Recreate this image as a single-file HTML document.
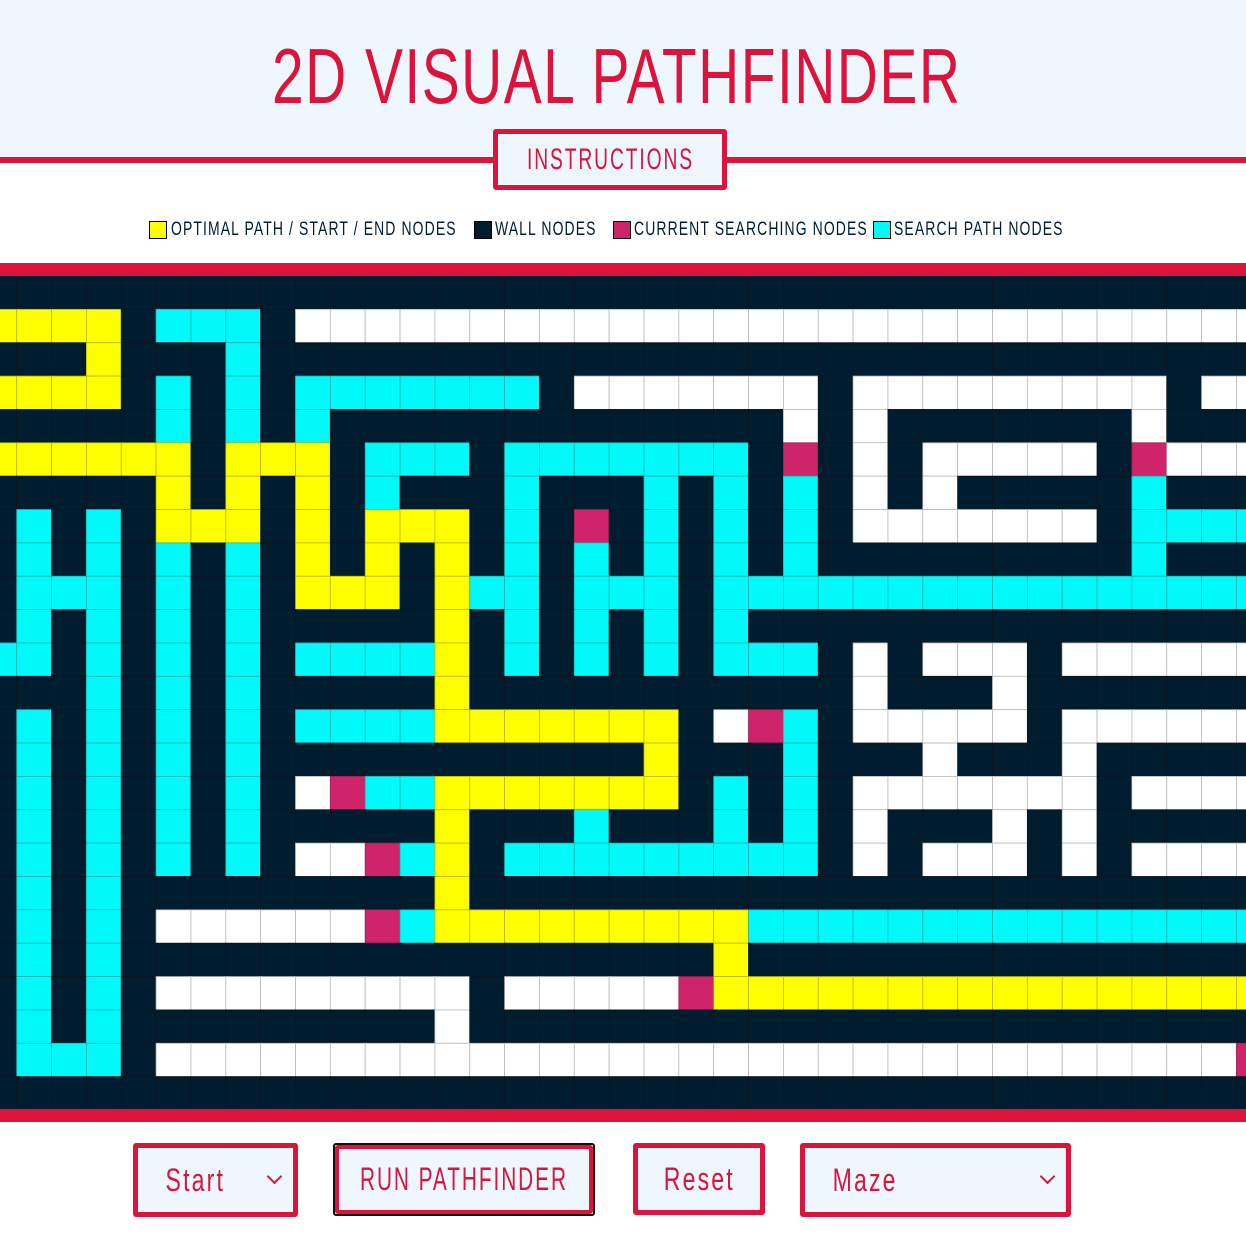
<!DOCTYPE html>
<html><head><meta charset="utf-8">
<style>
*{margin:0;padding:0;box-sizing:border-box}
body{width:1246px;height:1259px;background:#fff;position:relative;overflow:hidden;font-family:"Liberation Sans",sans-serif;color:#dc143c}
.hdr{position:absolute;left:0;top:0;width:1246px;height:159px;background:#eff7fe}
.line{position:absolute;left:0;top:157px;width:1246px;height:6px;background:#dc143c}
.title{position:absolute;left:272px;top:36px;width:686px;height:80px;overflow:visible}
.title span{display:inline-block;font-size:78px;line-height:80px;white-space:nowrap;transform-origin:0 0;transform:scaleX(0.73);letter-spacing:2px}
.box{position:absolute;border:5px solid #dc143c;border-radius:3px;background:#eff7fe;display:flex;align-items:center;justify-content:center;color:#dc143c;white-space:nowrap}
.box span{display:inline-block;transform:scaleX(0.72);letter-spacing:3px}
.legend{position:absolute;top:219px;left:0;height:22px;font-size:19px;color:#001d30;white-space:nowrap}
.legend .sw{position:absolute;top:2px;width:18px;height:18px;border:1px solid #000}
.legend .tx{position:absolute;top:0;display:inline-block;transform-origin:0 50%;transform:scaleX(0.735);letter-spacing:1.5px}
.band{position:absolute;left:0;width:1246px;height:13px;background:#dc143c}
.chev{position:absolute;width:11px;height:11px;border-right:2px solid #dc143c;border-bottom:2px solid #dc143c;transform:rotate(45deg)}
</style></head><body>
<div class="hdr"></div>
<div class="line"></div>
<div class="title"><span>2D VISUAL PATHFINDER</span></div>
<div class="box" style="left:493px;top:129px;width:234px;height:61px;font-size:30px;"><span style="transform:scaleX(0.64)">INSTRUCTIONS</span></div>

<div class="legend">
 <div class="sw" style="left:149px;background:#ffff00"></div><span class="tx" style="left:171px">OPTIMAL PATH / START / END NODES</span>
 <div class="sw" style="left:474px;background:#001d30"></div><span class="tx" style="left:495px">WALL NODES</span>
 <div class="sw" style="left:613px;background:#d0246a"></div><span class="tx" style="left:634px">CURRENT SEARCHING NODES</span>
 <div class="sw" style="left:873px;background:#00fafa"></div><span class="tx" style="left:894px">SEARCH PATH NODES</span>
</div>

<div class="band" style="top:263px"></div>
<svg id="g" style="position:absolute;left:0;top:276px" width="1246" height="834" xmlns="http://www.w3.org/2000/svg"></svg>
<div class="band" style="top:1109px"></div>

<div class="box" style="left:133px;top:1143px;width:165px;height:74px;font-size:32px;justify-content:flex-start;padding-left:16px"><span>Start</span></div>
<div class="chev" style="left:269px;top:1171px"></div>
<div style="position:absolute;left:333px;top:1143px;width:262px;height:73px;border:2px solid #111;border-radius:3px"></div>
<div class="box" style="left:335px;top:1145px;width:258px;height:69px;font-size:32px;border-width:4px"><span style="transform:scaleX(0.65)">RUN PATHFINDER</span></div>
<div class="box" style="left:633px;top:1143px;width:132px;height:72px;font-size:32px"><span>Reset</span></div>
<div class="box" style="left:800px;top:1143px;width:271px;height:74px;font-size:32px;justify-content:flex-start;padding-left:15px"><span>Maze</span></div>
<div class="chev" style="left:1042px;top:1171px"></div>

<script>
var R=[
"WWWWWWWWWWWWWWWWWWWWWWWWWWWWWWWWWWWWW",
"YYYYWCCCWEEEEEEEEEEEEEEEEEEEEEEEEEEEE",
"WWWYWWWCWWWWWWWWWWWWWWWWWWWWWWWWWWWWW",
"YYYYWCWCWCCCCCCCWEEEEEEEWEEEEEEEEEWEE",
"WWWWWCWCWCWWWWWWWWWWWWWEWEWWWWWWWEWWW",
"YYYYYYWYYYWCCCWCCCCCCCWPWEWEEEEEWPEEE",
"WWWWWYWYWYWCWWWCWWWCWCWCWEWEWWWWWCWWW",
"WCWCWYYYWYWYYYWCWPWCWCWCWEEEEEEEWCCCC",
"WCWCWCWCWYWYWYWCWCWCWCWCWWWWWWWWWCWWW",
"WCCCWCWCWYYYWYCCWCCCWCCCCCCCCCCCCCCCC",
"WCWCWCWCWWWWWYWCWCWCWCWWWWWWWWWWWWWWW",
"CCWCWCWCWCCCCYWCWCWCWCCCWEWEEEWEEEEEE",
"WWWCWCWCWWWWWYWWWWWWWWWWWEWWWEWWWWWWW",
"WCWCWCWCWCCCCYYYYYYYWEPCWEEEEEWEEEEEE",
"WCWCWCWCWWWWWWWWWWWYWWWCWWWEWWWEWWWWW",
"WCWCWCWCWEPCCYYYYYYYWCWCWEEEEEEEWEEEE",
"WCWCWCWCWWWWWYWWWCWWWCWCWEWWWEWEWWWWW",
"WCWCWCWCWEEPCYWCCCCCCCCCWEWEEEWEWEEEE",
"WCWCWWWWWWWWWYWWWWWWWWWWWWWWWWWWWWWWW",
"WCWCWEEEEEEPCYYYYYYYYYCCCCCCCCCCCCCCC",
"WCWCWWWWWWWWWWWWWWWWWYWWWWWWWWWWWWWWW",
"WCWCWEEEEEEEEEWEEEEEPYYYYYYYYYYYYYYYY",
"WCWCWWWWWWWWWEWWWWWWWWWWWWWWWWWWWWWWW",
"WCCCWEEEEEEEEEEEEEEEEEEEEEEEEEEEEEEEP",
"WWWWWWWWWWWWWWWWWWWWWWWWWWWWWWWWWWWWW"];
var col={W:"#001d30",E:"#ffffff",C:"#00fafa",Y:"#ffff00",P:"#d0246a"};
var st={W:"#0a1420",E:"#b8b8b8",C:"#1fb5b5",Y:"#b8b800",P:"#a01e52"};
var s="",cw=34.85,ch=33.36,x0=-18.15;
for(var r=0;r<R.length;r++)for(var c=0;c<R[r].length;c++){var k=R[r][c];
s+='<rect x="'+(x0+c*cw).toFixed(2)+'" y="'+(r*ch).toFixed(2)+'" width="'+cw+'" height="'+ch+'" fill="'+col[k]+'" stroke="'+st[k]+'" stroke-width="0.8"/>';}
document.getElementById("g").innerHTML=s;
</script>
</body></html>
